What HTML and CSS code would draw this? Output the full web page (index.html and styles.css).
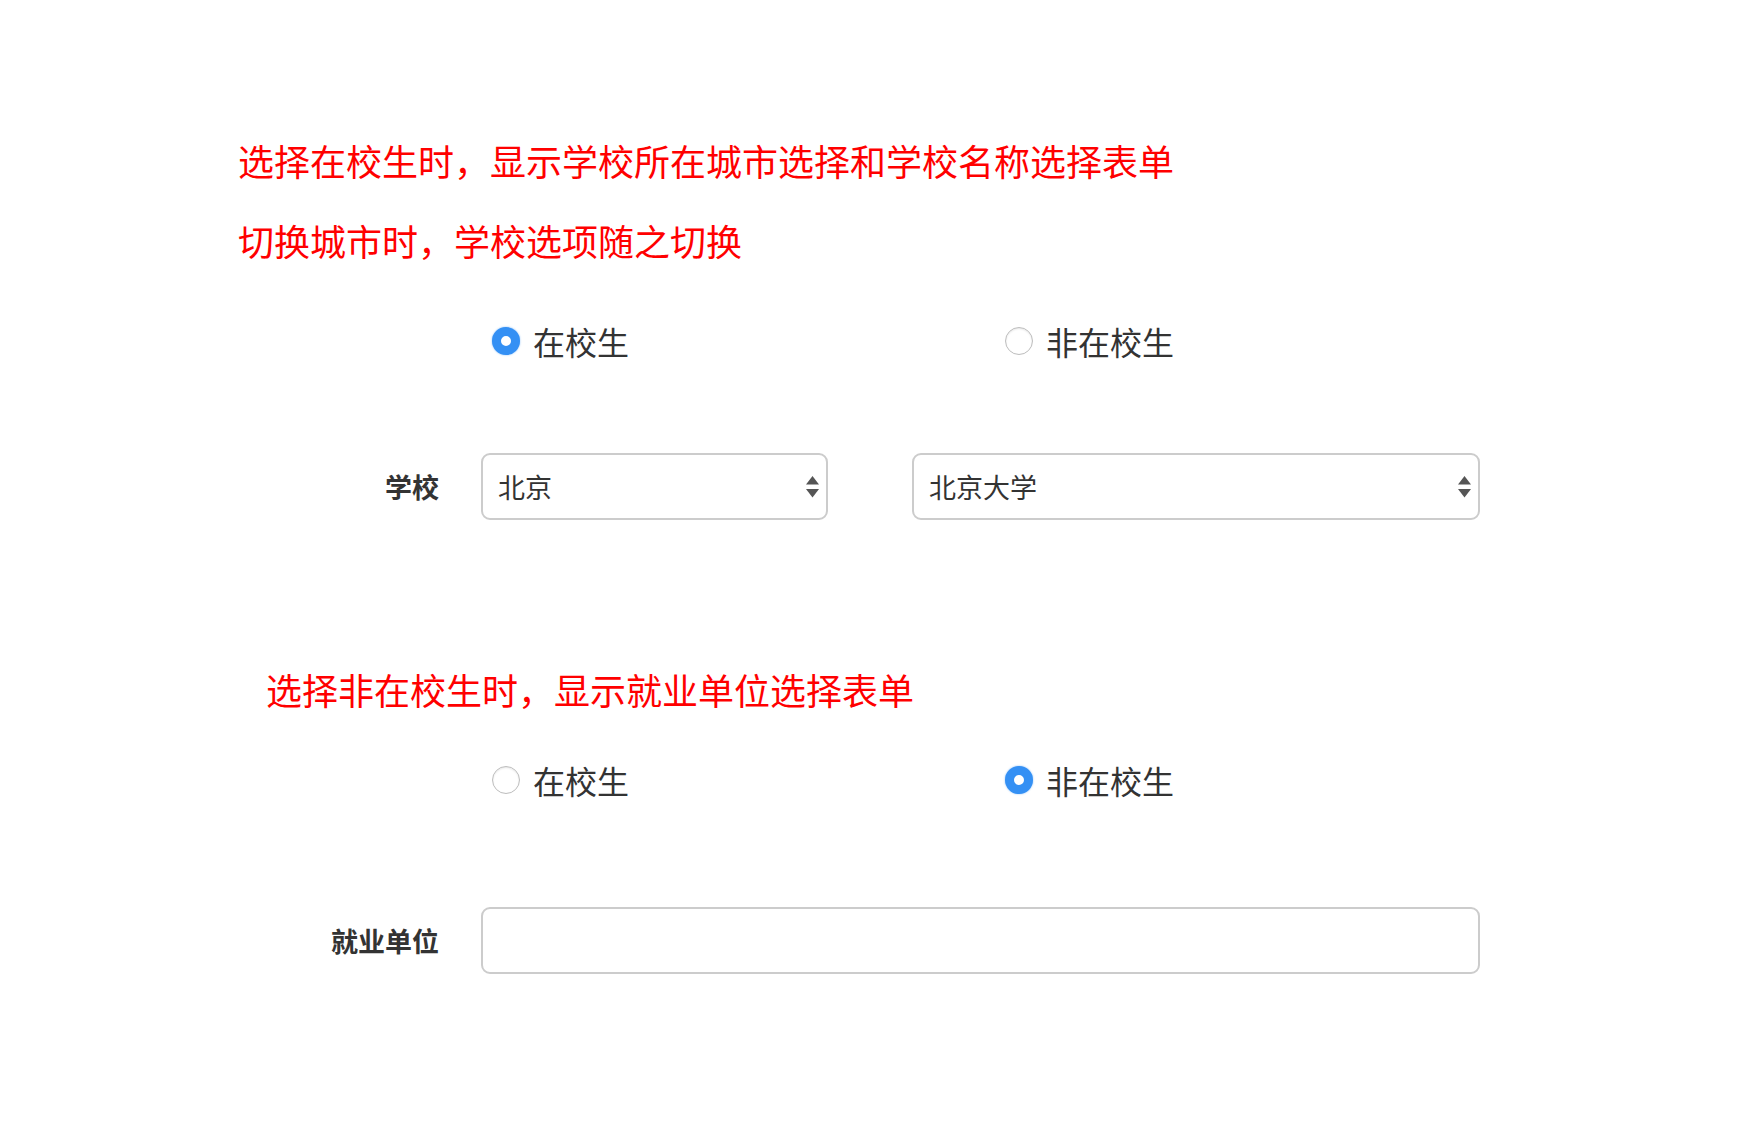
FILE: index.html
```html
<!DOCTYPE html>
<html lang="zh-CN">
<head>
<meta charset="utf-8">
<title>学校/就业单位表单</title>
<link rel="stylesheet" href="styles.css">
</head>
<body>
<div class="page">
  <section class="block block-school">
    <p class="note">选择在校生时，显示学校所在城市选择和学校名称选择表单</p>
    <p class="note note-second">切换城市时，学校选项随之切换</p>
    <div class="radio-row">
      <label class="option"><input type="radio" name="s1" class="radio" checked><span class="opt-text">在校生</span></label>
      <label class="option"><input type="radio" name="s1" class="radio"><span class="opt-text">非在校生</span></label>
    </div>
    <div class="form-row form-row-school">
      <span class="field-label">学校</span>
      <div class="select-wrap select-city">
        <select class="select"><option>北京</option><option>上海</option></select>
        <svg class="arrows" width="13" height="22" viewBox="0 0 13 22"><path d="M6.5 0 L13 8.5 L0 8.5 Z" fill="#555"/><path d="M0 13 L13 13 L6.5 21.5 Z" fill="#555"/></svg>
      </div>
      <div class="select-wrap select-school">
        <select class="select"><option>北京大学</option><option>清华大学</option></select>
        <svg class="arrows" width="13" height="22" viewBox="0 0 13 22"><path d="M6.5 0 L13 8.5 L0 8.5 Z" fill="#555"/><path d="M0 13 L13 13 L6.5 21.5 Z" fill="#555"/></svg>
      </div>
    </div>
  </section>

  <section class="block block-work">
    <p class="note note-work">选择非在校生时，显示就业单位选择表单</p>
    <div class="radio-row radio-row-work">
      <label class="option"><input type="radio" name="s2" class="radio"><span class="opt-text">在校生</span></label>
      <label class="option"><input type="radio" name="s2" class="radio" checked><span class="opt-text">非在校生</span></label>
    </div>
    <div class="form-row form-row-work">
      <span class="field-label">就业单位</span>
      <input type="text" class="text-input">
    </div>
  </section>
</div>
</body>
</html>
```

FILE: styles.css
```css
html, body {
  margin: 0;
  padding: 0;
  background: #ffffff;
}

body {
  font-family: "Noto Sans CJK SC", "Noto Sans", sans-serif;
  color: #333333;
}

.page {
  width: 1739px;
  min-height: 1138px;
  padding-top: 136px;
  box-sizing: border-box;
}

.block-work {
  margin-top: 145px;
}

.note {
  margin: 0;
  padding-left: 238px;
  font-size: 36px;
  line-height: 48px;
  color: #ff0000;
  white-space: nowrap;
}

.note-second {
  margin-top: 32px;
}

.note-work {
  padding-left: 266px;
}

.radio-row {
  display: flex;
  align-items: center;
  height: 48px;
  margin-top: 53px;
  padding-left: 492px;
}

.radio-row-work {
  margin-top: 43px;
  padding-left: 492px;
}

.option {
  display: flex;
  align-items: center;
  width: 513px;
  gap: 13px;
  cursor: pointer;
}

.radio {
  appearance: none;
  -webkit-appearance: none;
  margin: 0;
  width: 28px;
  height: 28px;
  border-radius: 50%;
  border: 1px solid #bdbdbd;
  background: #ffffff;
  box-shadow: inset 0 1px 2px rgba(0, 0, 0, 0.1);
  box-sizing: border-box;
  flex: none;
}

.radio:checked {
  border: 9px solid #3490f4;
  background: #ffffff;
  box-shadow: 0 0 2px rgba(52, 144, 244, 0.6);
}

.opt-text {
  font-size: 32px;
  line-height: 48px;
  color: #333333;
}

.form-row {
  display: flex;
  align-items: center;
}

.form-row-school {
  margin-top: 88px;
}

.form-row-work {
  margin-top: 103px;
}

.field-label {
  width: 481px;
  padding-right: 42px;
  box-sizing: border-box;
  text-align: right;
  font-size: 27px;
  font-weight: bold;
  color: #333333;
  flex: none;
}

.select-wrap {
  position: relative;
  flex: none;
}

.select-city {
  width: 347px;
}

.select-school {
  width: 568px;
  margin-left: 84px;
}

.select {
  appearance: none;
  -webkit-appearance: none;
  width: 100%;
  height: 67px;
  margin: 0;
  padding: 0 40px 0 15px;
  border: 2px solid #cccccc;
  border-radius: 9px;
  background: #ffffff;
  font-family: "Noto Sans CJK SC", "Noto Sans", sans-serif;
  font-size: 27px;
  color: #333333;
  box-sizing: border-box;
  outline: none;
}

.arrows {
  position: absolute;
  right: 9px;
  top: 23px;
  pointer-events: none;
}

.text-input {
  width: 999px;
  height: 67px;
  margin: 0;
  padding: 0 15px;
  border: 2px solid #cccccc;
  border-radius: 9px;
  background: #ffffff;
  box-sizing: border-box;
  font-size: 27px;
  outline: none;
  flex: none;
}
```
